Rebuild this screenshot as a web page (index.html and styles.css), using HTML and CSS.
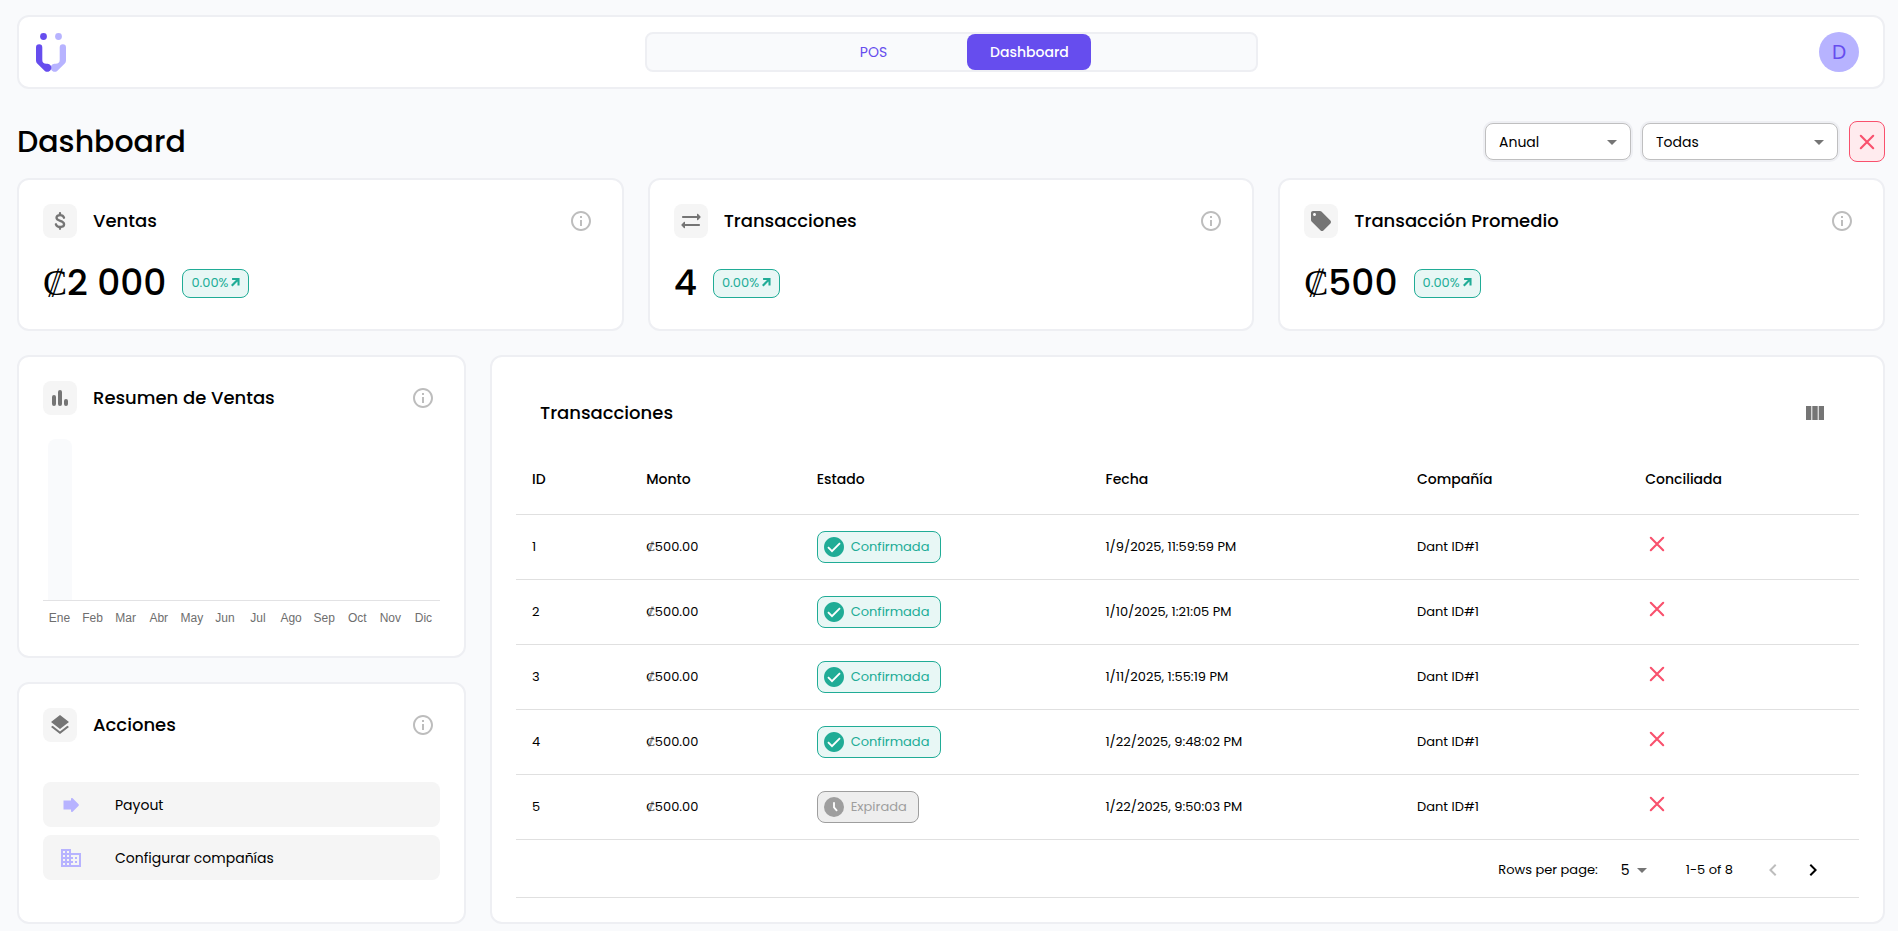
FILE: index.html
```html
<!DOCTYPE html>
<html lang="es">
<head>
<meta charset="utf-8">
<title>Dashboard</title>
<meta name="viewport" content="width=device-width, initial-scale=1">
<link rel="stylesheet" href="styles.css">
</head>
<body>
<svg class="sprite" aria-hidden="true">
  <symbol id="i-info" viewBox="0 0 24 24"><path d="M11 7h2v2h-2zm0 4h2v6h-2zm1-9C6.480 2 2 6.480 2 12s4.480 10 10 10 10-4.480 10-10S17.520 2 12 2zm0 18c-4.410 0-8-3.590-8-8s3.590-8 8-8 8 3.590 8 8-3.590 8-8 8z"/></symbol>
  <symbol id="i-up" viewBox="0 0 10 10"><path d="M1.200 0H9.500V8.300H7.200V4L1.700 9.500 0 7.800 5.500 2.300H1.200z"/></symbol>
  <symbol id="i-close" viewBox="0 0 24 24"><path d="M5.800 5.800l12.400 12.400M18.200 5.800L5.800 18.200" fill="none" stroke="currentColor" stroke-width="2.100" stroke-linecap="round"/></symbol>
  <symbol id="i-drop" viewBox="0 0 24 24"><path d="M7 10l5 5 5-5z"/></symbol>
  <symbol id="i-check" viewBox="0 0 24 24"><path d="M12 2C6.480 2 2 6.480 2 12s4.480 10 10 10 10-4.480 10-10S17.520 2 12 2z"/><path d="M6 12.200l4 4 8-8" fill="none" stroke="#fff" stroke-width="1.900"/></symbol>
  <symbol id="i-clock" viewBox="0 0 24 24"><circle cx="12" cy="12" r="10"/><path d="M12 7.800v4.600l2.600 3" fill="none" stroke="#fff" stroke-width="1.800" stroke-linecap="round"/></symbol>
</svg>
<div class="page">
  <header class="topbar">
    <a class="logo" href="#" aria-label="Inicio">
      <svg viewBox="0 0 30 39" width="30" height="39">
        <circle cx="7.500" cy="3.500" r="3.400" fill="#664dee"/><circle cx="22.500" cy="3.500" r="3.400" fill="#b7b3ff"/>
        <path d="M30 14.400a3.150 3.150 0 0 0-6.300 0V27c0 2.500-1.500 3.800-4 3.800h-1.200a4 4 0 1 0 2.700 7.100l7.600-7.400Q30 29.300 30 27.500z" fill="#b7b3ff"/>
        <path d="M0 14.400a3.150 3.150 0 0 1 6.300 0V27c0 2.500 1.500 3.800 4 3.800h1.200a4 4 0 1 1-2.700 7.100L1.200 30.500Q0 29.300 0 27.500z" fill="#664dee"/>
      </svg>
    </a>
    <nav class="tabs"><a class="tab" href="#">POS</a><a class="tab tab-active" href="#">Dashboard</a></nav>
    <button class="avatar" type="button">D</button>
  </header>

  <div class="heading">
    <h1>Dashboard</h1>
    <div class="filters">
      <div class="select select-period"><select aria-label="Periodo"><option>Anual</option></select><svg><use href="#i-drop"/></svg></div>
      <div class="select select-company"><select aria-label="Compañía"><option>Todas</option></select><svg><use href="#i-drop"/></svg></div>
      <button class="clear" type="button" aria-label="Limpiar"><svg class="icon"><use href="#i-close"/></svg></button>
    </div>
  </div>

  <main class="grid">
    <section class="card stat">
      <div class="card-head">
        <span class="badge"><svg class="icon" viewBox="0 0 24 24"><path d="M16 8.700C15.500 7.100 14.200 6.100 12.100 6.100c-2.300 0-3.600 1.100-3.600 2.700 0 3.900 7.600 2.200 7.600 6.500 0 1.700-1.500 2.700-3.900 2.700-2.200 0-3.700-.9-4.300-2.700M12 4.200v1.900M12 18v1.800" fill="none" stroke="currentColor" stroke-width="2.300" stroke-linecap="round"/></svg></span>
        <h2>Ventas</h2>
        <button class="info" type="button" aria-label="Información"><svg class="icon"><use href="#i-info"/></svg></button>
      </div>
      <div class="stat-row"><p class="value"><span class="colon">₡</span>2 000</p><span class="trend">0.00%<svg><use href="#i-up"/></svg></span></div>
    </section>
    <section class="card stat">
      <div class="card-head">
        <span class="badge"><svg class="icon" viewBox="0 0 24 24"><path d="M21.650 7.650l-2.790-2.790c-.32-.32-.86-.1-.86.35V7H4c-.55 0-1 .45-1 1s.45 1 1 1h14v1.790c0 .45.54.67.85.35l2.790-2.790c.2-.19.2-.51.010-.7zM2.350 16.350l2.790 2.790c.32.32.86.1.86-.35V17h14c.55 0 1-.45 1-1s-.45-1-1-1H6v-1.790c0-.45-.54-.67-.85-.35l-2.790 2.790c-.2.19-.2.51-.010.7z"/></svg></span>
        <h2>Transacciones</h2>
        <button class="info" type="button" aria-label="Información"><svg class="icon"><use href="#i-info"/></svg></button>
      </div>
      <div class="stat-row"><p class="value">4</p><span class="trend">0.00%<svg><use href="#i-up"/></svg></span></div>
    </section>
    <section class="card stat">
      <div class="card-head">
        <span class="badge"><svg class="icon" viewBox="0 0 24 24"><path d="M21.410 11.580l-9-9C12.050 2.220 11.550 2 11 2H4c-1.100 0-2 .9-2 2v7c0 .55.22 1.050.59 1.420l9 9c.36.36.86.58 1.410.58.55 0 1.050-.22 1.410-.59l7-7c.37-.36.59-.86.59-1.410 0-.55-.23-1.060-.59-1.420zM5.500 7C4.670 7 4 6.330 4 5.500S4.670 4 5.500 4 7 4.670 7 5.500 6.330 7 5.500 7z"/></svg></span>
        <h2>Transacción Promedio</h2>
        <button class="info" type="button" aria-label="Información"><svg class="icon"><use href="#i-info"/></svg></button>
      </div>
      <div class="stat-row"><p class="value"><span class="colon">₡</span>500</p><span class="trend">0.00%<svg><use href="#i-up"/></svg></span></div>
    </section>

    <div class="side">
      <section class="card summary">
        <div class="card-head">
          <span class="badge"><svg class="icon" viewBox="0 0 24 24"><path d="M6 11v7M12 6v12M18 15v3" fill="none" stroke="currentColor" stroke-width="4" stroke-linecap="round"/></svg></span>
          <h2>Resumen de Ventas</h2>
          <button class="info" type="button" aria-label="Información"><svg class="icon"><use href="#i-info"/></svg></button>
        </div>
        <div class="plot"><span class="column"></span></div>
        <div class="months"><span>Ene</span><span>Feb</span><span>Mar</span><span>Abr</span><span>May</span><span>Jun</span><span>Jul</span><span>Ago</span><span>Sep</span><span>Oct</span><span>Nov</span><span>Dic</span></div>
      </section>
      <section class="card actions">
        <div class="card-head">
          <span class="badge"><svg class="icon" viewBox="0 0 24 24"><path d="M11.990 18.540l-7.370-5.730L3 14.070l9 7 9-7-1.630-1.270-7.380 5.740zM12 16l7.360-5.730L21 9l-9-7-9 7 1.630 1.270L12 16z"/></svg></span>
          <h2>Acciones</h2>
          <button class="info" type="button" aria-label="Información"><svg class="icon"><use href="#i-info"/></svg></button>
        </div>
        <div class="action-list">
          <button class="action" type="button"><svg class="icon" viewBox="0 0 24 24"><path d="M4.500 7.500H12V6c0-.9 1-1.300 1.600-.7l6 6c.4.400.4 1 0 1.400l-6 6c-.6.600-1.600.200-1.600-.7v-1.500H4.500z"/></svg>Payout</button>
          <button class="action" type="button"><svg class="icon" viewBox="0 0 24 24"><path d="M12 7V3H2v18h20V7H12zM6 19H4v-2h2v2zm0-4H4v-2h2v2zm0-4H4V9h2v2zm0-4H4V5h2v2zm4 12H8v-2h2v2zm0-4H8v-2h2v2zm0-4H8V9h2v2zm0-4H8V5h2v2zm10 12h-8v-2h2v-2h-2v-2h2v-2h-2V9h8v10zm-2-8h-2v2h2v-2zm0 4h-2v2h2v-2z"/></svg>Configurar compañías</button>
        </div>
      </section>
    </div>

    <section class="card records">
      <div class="toolbar">
        <h2>Transacciones</h2>
        <button class="columns" type="button" aria-label="Columnas"><svg class="icon" viewBox="0 0 24 24"><path d="M3 5h5.300v14H3zM9.300 5h5.400v14H9.300zM15.700 5H21v14h-5.300z"/></svg></button>
      </div>
      <table>
        <thead><tr><th class="c-id">ID</th><th class="c-amount">Monto</th><th class="c-state">Estado</th><th class="c-date">Fecha</th><th class="c-company">Compañía</th><th>Conciliada</th></tr></thead>
        <tbody>
          <tr><td>1</td><td><span class="colon">₡</span>500.00</td><td><span class="chip chip-ok"><svg class="icon"><use href="#i-check"/></svg>Confirmada</span></td><td>1/9/2025, 11:59:59 PM</td><td>Dant ID#1</td><td><svg class="icon no"><use href="#i-close"/></svg></td></tr>
          <tr><td>2</td><td><span class="colon">₡</span>500.00</td><td><span class="chip chip-ok"><svg class="icon"><use href="#i-check"/></svg>Confirmada</span></td><td>1/10/2025, 1:21:05 PM</td><td>Dant ID#1</td><td><svg class="icon no"><use href="#i-close"/></svg></td></tr>
          <tr><td>3</td><td><span class="colon">₡</span>500.00</td><td><span class="chip chip-ok"><svg class="icon"><use href="#i-check"/></svg>Confirmada</span></td><td>1/11/2025, 1:55:19 PM</td><td>Dant ID#1</td><td><svg class="icon no"><use href="#i-close"/></svg></td></tr>
          <tr><td>4</td><td><span class="colon">₡</span>500.00</td><td><span class="chip chip-ok"><svg class="icon"><use href="#i-check"/></svg>Confirmada</span></td><td>1/22/2025, 9:48:02 PM</td><td>Dant ID#1</td><td><svg class="icon no"><use href="#i-close"/></svg></td></tr>
          <tr><td>5</td><td><span class="colon">₡</span>500.00</td><td><span class="chip chip-off"><svg class="icon"><use href="#i-clock"/></svg>Expirada</span></td><td>1/22/2025, 9:50:03 PM</td><td>Dant ID#1</td><td><svg class="icon no"><use href="#i-close"/></svg></td></tr>
        </tbody>
      </table>
      <div class="pager">
        <label for="rows">Rows per page:</label>
        <div class="rows"><select id="rows"><option>5</option></select><svg><use href="#i-drop"/></svg></div>
        <span>1-5 of 8</span>
        <div class="pager-nav">
          <button type="button" aria-label="Anterior" disabled><svg class="icon" viewBox="0 0 24 24"><path d="M15.410 7.410L14 6l-6 6 6 6 1.410-1.410L10.830 12z"/></svg></button>
          <button type="button" aria-label="Siguiente"><svg class="icon" viewBox="0 0 24 24"><path d="M10 6L8.590 7.410 13.170 12l-4.580 4.590L10 18l6-6z"/></svg></button>
        </div>
      </div>
    </section>
  </main>
</div>
</body>
</html>
```
FILE: styles.css
```css
* { box-sizing: border-box; }
body {
  margin: 0;
  background: #f9fafc;
  color: #000;
  font: 14px/20px Poppins, Inter, sans-serif;
}
h1, h2, p { margin: 0; font-weight: 500; }
h1 { font-size: 30px; line-height: 40px; }
h2 { font-size: 18px; line-height: 28px; }
button, select { font: inherit; color: inherit; }
button { padding: 0; border: 0; background: none; cursor: pointer; }
a { color: inherit; text-decoration: none; }
svg { display: block; flex: none; fill: currentColor; }
.sprite { display: none; }
.icon { width: 24px; height: 24px; }
.colon { font-family: "Liberation Serif", serif; font-weight: 400; }

.page { padding: 15px 13px 6px 17px; }

.topbar {
  display: grid;
  grid-template-columns: 48px 1fr 40px;
  align-items: center;
  height: 74px;
  padding: 0 24px 0 17px;
  border: 2px solid #eeeff3;
  border-radius: 12px;
  background: #fff;
}
.logo { justify-self: start; }
.tabs {
  display: flex;
  justify-content: center;
  justify-self: center;
  gap: 32px;
  width: 35.3%;
  height: 40px;
  border: 2px solid #eeeff3;
  border-radius: 8px;
  background: #f9fafc;
}
.tab { width: 124px; border-radius: 8px; color: #664dee; text-align: center; line-height: 36px; }
.tab-active { background: #664dee; color: #fff; font-weight: 500; }
.avatar {
  width: 40px;
  height: 40px;
  border-radius: 50%;
  background: #b7b3ff;
  color: #664dee;
  font-size: 20px;
}

.heading { display: flex; align-items: center; justify-content: space-between; height: 41px; margin: 32px 0 16px; }
.filters { display: flex; align-items: center; gap: 11px; }
.select { position: relative; }
.select-period { width: 146px; }
.select-company { width: 196px; }
.select select, .rows select { width: 100%; appearance: none; background: none; outline: none; }
.select select {
  height: 37px;
  padding: 0 32px 0 13px;
  border: 1px solid #bfbfc0;
  border-radius: 8px;
  background: #fff;
  box-shadow: 0 0 0 2px #eeeff3;
}
.select svg, .rows svg { position: absolute; top: 50%; width: 24px; height: 24px; margin-top: -12px; color: #757575; pointer-events: none; }
.select svg { right: 7px; }
.clear {
  display: grid;
  place-items: center;
  width: 36px;
  height: 41px;
  border: 1px solid #f9516d;
  border-radius: 8px;
  background: #ffebee;
  color: #f9516d;
}

.grid { display: grid; grid-template-columns: repeat(12, 1fr); gap: 24px; }
.card { padding: 24px; border: 2px solid #eeeff3; border-radius: 12px; background: #fff; }
.stat { grid-column: span 4; padding-bottom: 22px; }
.side { display: flex; flex-direction: column; grid-column: span 3; gap: 24px; }
.records { grid-column: span 9; }
.card-head { display: flex; align-items: center; gap: 16px; height: 34px; }
.badge { display: grid; place-items: center; width: 34px; height: 34px; border-radius: 8px; background: #f5f5f5; color: #757575; }
.info { margin-left: auto; padding: 5px; color: #bdbdbd; }
.stat-row { display: flex; align-items: center; gap: 16px; padding: 21px 0 0; }
.value { font-size: 36px; line-height: 48px; }
.trend {
  display: flex;
  gap: 3px;
  height: 29px;
  padding: 3px 8px;
  border: 1px solid #20ac96;
  border-radius: 8px;
  background: #e8f7f5;
  color: #20ac96;
  font-size: 13px;
}
.trend svg { width: 9px; height: 9px; margin-top: 5px; }

.plot { display: grid; grid-template-columns: repeat(12, 1fr); height: 162px; margin-top: 24px; border-bottom: 1px solid #e2e2e4; }
.column { margin: 0 4px 0 5px; border-radius: 8px 8px 0 0; background: #f9fafc; }
.months { display: grid; grid-template-columns: repeat(12, 1fr); padding: 5px 0 6px; color: #6e6e6e; font: 12px/24px "Liberation Sans", Arial, sans-serif; text-align: center; }
.summary { padding-bottom: 20px; }

.actions { flex: 1; }
.action-list { display: flex; flex-direction: column; gap: 8px; padding: 40px 0 17px; }
.action { display: flex; align-items: center; gap: 32px; height: 45px; padding: 0 16px; border-radius: 8px; background: #f5f5f5; }
.action svg { color: #b7b3ff; }

.toolbar { display: flex; align-items: center; justify-content: space-between; height: 64px; padding: 0 32px 0 24px; }
.columns { color: #757575; }
table { width: 100%; border-collapse: collapse; table-layout: fixed; font-size: 13px; }
th, td { height: 65px; padding: 0 16px; border-bottom: 1px solid #e0e0e0; text-align: left; vertical-align: middle; }
th { height: 69px; font-size: 14px; font-weight: 500; }
.c-id { width: 8.5%; }
.c-amount { width: 12.7%; }
.c-state { width: 21.5%; }
.c-date { width: 23.2%; }
.c-company { width: 17%; }
.chip { display: inline-flex; align-items: center; gap: 5px; height: 32px; padding: 0 11px 0 4px; border: 1px solid; border-radius: 8px; vertical-align: middle; }
.chip-ok { background: #e8f7f5; color: #20ac96; }
.chip-off { background: #eeeeee; color: #9e9e9e; }
.no { color: #f9516d; margin-bottom: 5px; }

.pager { display: flex; align-items: center; justify-content: flex-end; height: 58px; padding-right: 34px; padding-top: 4px; border-bottom: 1px solid #e0e0e0; font-size: 13px; }
.rows { position: relative; width: 40px; margin: 0 32px 0 16px; }
.rows select { padding: 0 0 0 7px; border: 0; font-size: 14px; }
.rows svg { right: 0; }
.pager-nav { display: flex; gap: 16px; margin-left: 28px; }
.pager-nav button:disabled { color: #bdbdbd; }
```
